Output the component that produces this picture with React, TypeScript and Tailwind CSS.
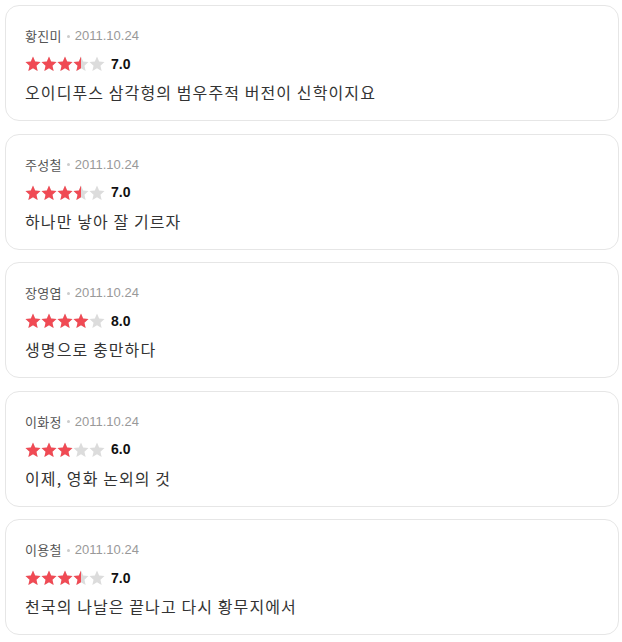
import React from 'react';

interface Review {
  name: string;
  date: string;
  score: number;
  text: string;
}

const reviews: Review[] = [
  { name: '황진미', date: '2011.10.24', score: 7, text: '오이디푸스 삼각형의 범우주적 버전이 신학이지요' },
  { name: '주성철', date: '2011.10.24', score: 7, text: '하나만 낳아 잘 기르자' },
  { name: '장영엽', date: '2011.10.24', score: 8, text: '생명으로 충만하다' },
  { name: '이화정', date: '2011.10.24', score: 6, text: '이제, 영화 논외의 것' },
  { name: '이용철', date: '2011.10.24', score: 7, text: '천국의 나날은 끝나고 다시 황무지에서' },
];

const STAR = 'M8 0.6l2.15 5 5.35.5-4.05 3.55 1.2 5.25L8 12.15l-4.65 2.75 1.2-5.25L.5 6.1l5.35-.5z';

function Star({ fill }: { fill: number }) {
  return (
    <span className="relative inline-block w-[16px] h-[16px]">
      <svg width="16" height="16" viewBox="0 0 16 16" className="absolute left-0 top-0">
        <path d={STAR} fill="#dcdcdc" />
      </svg>
      {fill > 0 && (
        <span className="absolute left-0 top-0 h-[16px] overflow-hidden" style={{ width: `${fill * 16}px` }}>
          <svg width="16" height="16" viewBox="0 0 16 16">
            <path d={STAR} fill="#f04a54" />
          </svg>
        </span>
      )}
    </span>
  );
}

function Stars({ score }: { score: number }) {
  const v = score / 2;
  return (
    <div className="flex items-center">
      {[0, 1, 2, 3, 4].map(i => (
        <Star key={i} fill={Math.max(0, Math.min(1, v - i))} />
      ))}
    </div>
  );
}

export default function App() {
  return (
    <div className="bg-white min-h-[642px] pl-[5px] pr-[3px] pt-[5px] font-['Noto_Sans_CJK_KR',sans-serif]">
      <div className="flex flex-col gap-[12.5px]">
        {reviews.map((r, i) => (
          <div key={i} className="border border-[#e6e6e6] rounded-[14px] px-[19px] pt-[21px] pb-[16px]">
            <div className="flex items-center h-[18px] text-[13px]">
              <span className="text-[#555] tracking-[0.3px]">{r.name}</span>
              <span className="mx-[5px] w-[3px] h-[3px] rounded-full bg-[#ccc]" />
              <span className="text-[#999] font-['Liberation_Sans',sans-serif]">{r.date}</span>
            </div>
            <div className="flex items-center gap-[6px] mt-[9px] h-[20px]">
              <Stars score={r.score} />
              <span className="text-[14px] font-bold text-[#111] font-['Liberation_Sans',sans-serif]">{r.score.toFixed(1)}</span>
            </div>
            <div className="mt-[6px] text-[16px] leading-[24px] text-[#333] tracking-[1.1px]">{r.text}</div>
          </div>
        ))}
      </div>
    </div>
  );
}
